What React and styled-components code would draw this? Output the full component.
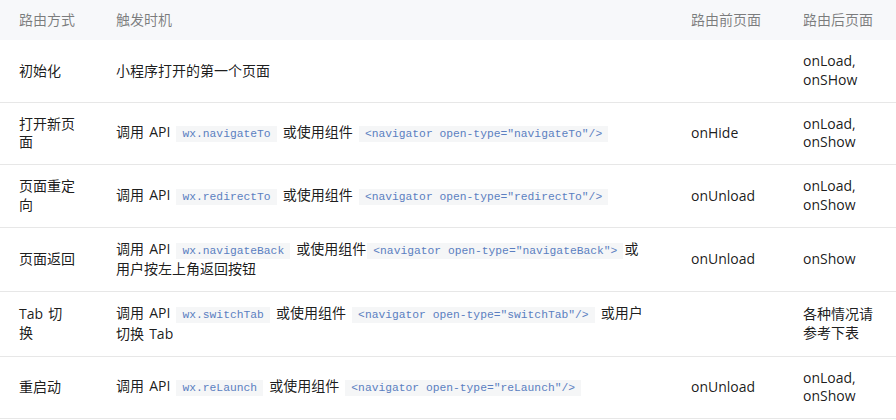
import styled, { createGlobalStyle } from "styled-components";

const GlobalStyle = createGlobalStyle`
  body {
    margin: 0;
    background: #ffffff;
    font-family: "Open Sans", "Noto Sans CJK SC", sans-serif;
  }
`;

const rows = [
  {
    way: "初始化",
    trigger: ["小程序打开的第一个页面"],
    before: "",
    after: "onLoad, onSHow",
  },
  {
    way: "打开新页面",
    trigger: ["调用 API ", { code: "wx.navigateTo" }, " 或使用组件 ", { code: '<navigator open-type="navigateTo"/>' }],
    before: "onHide",
    after: "onLoad, onShow",
  },
  {
    way: "页面重定向",
    trigger: ["调用 API ", { code: "wx.redirectTo" }, " 或使用组件 ", { code: '<navigator open-type="redirectTo"/>' }],
    before: "onUnload",
    after: "onLoad, onShow",
  },
  {
    way: "页面返回",
    trigger: ["调用 API ", { code: "wx.navigateBack" }, " 或使用组件", { code: '<navigator open-type="navigateBack">' }, "或用户按左上角返回按钮"],
    before: "onUnload",
    after: "onShow",
  },
  {
    way: "Tab 切换",
    trigger: ["调用 API ", { code: "wx.switchTab" }, " 或使用组件 ", { code: '<navigator open-type="switchTab"/>' }, " 或用户切换 Tab"],
    before: "",
    after: "各种情况请参考下表",
  },
  {
    way: "重启动",
    trigger: ["调用 API ", { code: "wx.reLaunch" }, " 或使用组件 ", { code: '<navigator open-type="reLaunch"/>' }],
    before: "onUnload",
    after: "onLoad, onShow",
  },
];

const App = () => {
  return (
    <Wrapper>
      <GlobalStyle />
      <Table>
        <colgroup>
          <col style={{ width: 97 }} />
          <col />
          <col style={{ width: 112 }} />
          <col style={{ width: 112 }} />
        </colgroup>
        <thead>
          <tr>
            <Th>路由方式</Th>
            <Th>触发时机</Th>
            <Th>路由前页面</Th>
            <Th>路由后页面</Th>
          </tr>
        </thead>
        <tbody>
          {rows.map((row, index) => (
            <Row key={index}>
              <Td $right="21.8px">{row.way}</Td>
              <Td $right="27px">
                {row.trigger.map((part, i) =>
                  typeof part === "string" ? (
                    <span key={i}>{part}</span>
                  ) : (
                    <Code key={i}>{part.code}</Code>
                  )
                )}
              </Td>
              <Td>{row.before}</Td>
              <Td>{row.after}</Td>
            </Row>
          ))}
        </tbody>
      </Table>
    </Wrapper>
  );
};

const Wrapper = styled.div`
  width: 896px;
  overflow: hidden;
`;

const Table = styled.table`
  width: 896px;
  border-collapse: collapse;
  table-layout: fixed;
  font-size: 14px;
  line-height: 18.5px;
  word-spacing: 1.5px;
  color: rgba(0, 0, 0, 0.9);
`;

const Th = styled.th`
  background-color: #f7f8fa;
  color: rgba(0, 0, 0, 0.5);
  font-weight: normal;
  text-align: left;
  padding: 10.75px 19px;
  height: 18.5px;
`;

const Row = styled.tr`
  border-bottom: 1px solid #e7e7e7;
`;

const Td = styled.td`
  padding: 12.25px ${(props) => props.$right || "19px"} 12.25px 19px;
  vertical-align: middle;
  text-align: left;
  word-break: break-word;
`;

const Code = styled.code`
  font-family: "Liberation Mono", "DejaVu Sans Mono", monospace;
  font-size: 11.3px;
  word-spacing: 0;
  color: #5b7fc1;
  background-color: #f5f6f7;
  padding: 2px 6px;
  margin: 0 1px;
`;

export default App;
